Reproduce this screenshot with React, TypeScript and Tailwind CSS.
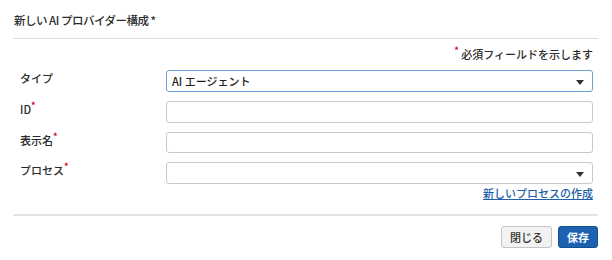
const font = { fontFamily: '"Noto Sans CJK JP", "Noto Sans", sans-serif' };

function Req() {
  return <span className="text-[#d0021b] text-[9px] font-bold align-top leading-none">*</span>;
}

function FormRow({ label, required, children }: { label: string; required?: boolean; children: React.ReactNode }) {
  return (
    <div className="flex items-start">
      <div className="w-[153px] pl-[7px] leading-[17px] text-[11px] font-medium text-[#2b2b2b]">
        {label}
        {required && <Req />}
      </div>
      <div className="flex-1 pr-[6px]">{children}</div>
    </div>
  );
}

function Caret() {
  return (
    <svg width="8" height="5" viewBox="0 0 8 5" className="absolute right-[8px] top-[9px]">
      <path d="M0 0 H8 L4 5 Z" fill="#333" />
    </svg>
  );
}

export default function App() {
  return (
    <div className="w-[612px] h-[260px] bg-white px-[13px] pt-[11px] text-[#2b2b2b]" style={font}>
      <div className="ml-[1px] text-[11.5px] font-medium leading-[18px] tracking-[-0.5px]">新しい AI プロバイダー構成 *</div>
      <div className="mt-[9px] h-px bg-[#dcdcdc] w-[585px]" />

      <div className="flex justify-end pr-[6px] mt-[7px] text-[11px] font-medium leading-[16px]">
        <span>
          <Req /> 必須フィールドを示します
        </span>
      </div>

      <div className="mt-[8px] flex flex-col gap-[9px]">
        <FormRow label="タイプ">
          <div className="relative h-[22px] rounded-[3px] border border-[#6a9fd8] bg-white pl-[5px] text-[11px] font-medium leading-[20px] text-[#222]">
            AI エージェント
            <Caret />
          </div>
        </FormRow>
        <FormRow label="ID" required>
          <div className="h-[22px] rounded-[3px] border border-[#c9c9c9] bg-white" />
        </FormRow>
        <FormRow label="表示名" required>
          <div className="h-[21px] rounded-[3px] border border-[#c9c9c9] bg-white" />
        </FormRow>
        <FormRow label="プロセス" required>
          <div className="relative h-[22px] rounded-[3px] border border-[#c9c9c9] bg-white">
            <Caret />
          </div>
          <div className="flex justify-end mt-[1px]">
            <a className="text-[11px] font-medium leading-[16px] text-[#1d5fa8] underline cursor-pointer">新しいプロセスの作成</a>
          </div>
        </FormRow>
      </div>

      <div className="mt-[13px] h-[2px] bg-[#e4e4e4] w-[585px]" />

      <div className="mt-[10px] flex justify-end gap-[6px] w-[585px]">
        <button className="h-[22px] w-[51px] rounded-[3px] border border-[#c4c4c4] bg-[#f2f2f2] text-[11px] font-medium text-[#333]">
          閉じる
        </button>
        <button className="h-[22px] w-[40px] rounded-[3px] border border-[#154f8f] bg-[#1c62b0] text-[11px] font-bold text-white">
          保存
        </button>
      </div>
    </div>
  );
}
